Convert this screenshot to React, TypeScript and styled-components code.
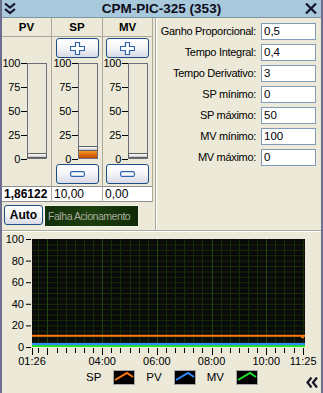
import React from 'react';
import styled, { createGlobalStyle } from 'styled-components';

const GlobalStyle = createGlobalStyle`
  html, body {
    margin: 0;
    padding: 0;
    background: #ece9d8;
  }
  body {
    font-family: "Liberation Sans", Arial, sans-serif;
    font-size: 11px;
    color: #000;
  }
  * { box-sizing: border-box; }
`;

interface Param {
  label: string;
  value: string;
}

interface Channel {
  name: string;
  value: string;
  fill: number;
  bold?: boolean;
  buttons?: boolean;
}

const params: Param[] = [
  { label: 'Ganho Proporcional:', value: '0,5' },
  { label: 'Tempo Integral:', value: '0,4' },
  { label: 'Tempo Derivativo:', value: '3' },
  { label: 'SP mínimo:', value: '0' },
  { label: 'SP máximo:', value: '50' },
  { label: 'MV mínimo:', value: '100' },
  { label: 'MV máximo:', value: '0' },
];

const channels: Channel[] = [
  { name: 'PV', value: '1,86122', fill: 0, bold: true },
  { name: 'SP', value: '10,00', fill: 7, buttons: true },
  { name: 'MV', value: '0,00', fill: 0, buttons: true },
];

const scale = ['100', '75', '50', '25', '0'];

// chart geometry (svg coords)
const PX = 30;
const PY = 7;
const PW = 273;
const PH = 108;
const START = 86; // 01:26 in minutes
const END = 685; // 11:25
const tx = (m: number) => PX + ((m - START) * PW) / (END - START);
const vy = (v: number) => PY + PH - (v * PH) / 100;

const Chart = () => {
  const ticks: number[] = [];
  for (let m = 100; m < END; m += 20) ticks.push(m);
  const hLines: number[] = [];
  for (let v = 5; v < 100; v += 5) hLines.push(v);
  const labels = [
    { t: START, s: '01:26' },
    { t: 240, s: '04:00' },
    { t: 360, s: '06:00' },
    { t: 480, s: '08:00' },
    { t: 600, s: '10:00' },
    { t: END - 4, s: '11:25' },
  ];
  return (
    <svg width={319} height={134} style={{ display: 'block' }}>
      <rect x={PX} y={PY} width={PW} height={PH} fill="#0a0a0a" />
      {hLines.map((v) => (
        <line key={v} x1={PX} x2={PX + PW} y1={vy(v) + 0.5} y2={vy(v) + 0.5} stroke="#142c09" />
      ))}
      {ticks.map((m) => (
        <line
          key={m}
          x1={Math.round(tx(m)) + 0.5}
          x2={Math.round(tx(m)) + 0.5}
          y1={PY}
          y2={PY + PH}
          stroke={m % 120 === 0 ? '#244410' : '#142c09'}
        />
      ))}
      <line x1={PX} x2={PX + PW} y1={vy(10) - 0.5} y2={vy(10) - 0.5} stroke="#ff7a10" strokeWidth={2} />
      <rect x={PX + PW - 4} y={vy(10) - 1} width={3} height={3} fill="#ff7a10" />
      <line x1={PX} x2={PX + PW} y1={PY + PH - 3} y2={PY + PH - 3} stroke="#2f8cff" strokeWidth={2} />
      <line x1={PX} x2={PX + PW} y1={PY + PH - 1} y2={PY + PH - 1} stroke="#22e02a" strokeWidth={2} />
      {[0, 20, 40, 60, 80, 100].map((v) => (
        <g key={v}>
          <line x1={PX - 6} x2={PX - 1} y1={vy(v) + 0.5} y2={vy(v) + 0.5} stroke="#000" />
          <text x={PX - 8} y={vy(v) + 4} textAnchor="end" fontSize={11} fontFamily="Liberation Sans, Arial, sans-serif">
            {v}
          </text>
        </g>
      ))}
      {[START, ...ticks, END - 4].map((m) => (
        <line
          key={'t' + m}
          x1={Math.round(tx(m)) + 0.5}
          x2={Math.round(tx(m)) + 0.5}
          y1={PY + PH + 1}
          y2={PY + PH + (m % 120 === 0 || m === START || m === END - 4 ? 8 : 6)}
          stroke="#000"
        />
      ))}
      {labels.map((l) => (
        <text
          key={l.s}
          x={tx(l.t)}
          y={133}
          textAnchor="middle"
          fontSize={11}
          fontFamily="Liberation Sans, Arial, sans-serif"
        >
          {l.s}
        </text>
      ))}
    </svg>
  );
};

const PlusIcon = () => (
  <svg width={15} height={13} viewBox="0 0 15 13">
    <path d="M5.5 0.5h4v4h5v4h-5v4h-4v-4h-5v-4h5z" fill="#fff" stroke="#2c63ab" strokeWidth={1.2} />
  </svg>
);

const MinusIcon = () => (
  <svg width={15} height={6} viewBox="0 0 15 6">
    <rect x={0.6} y={0.6} width={13.8} height={4.8} rx={1.5} fill="#fff" stroke="#2c63ab" strokeWidth={1.2} />
  </svg>
);

const LegendLine = ({ color }: { color: string }) => (
  <svg width={20} height={13} viewBox="0 0 20 13">
    <polyline points="1,9 13,2 19,6" fill="none" stroke={color} strokeWidth={2} />
  </svg>
);

const App = () => {
  return (
    <>
      <GlobalStyle />
      <Window>
        <TitleBar>
          <svg width={12} height={13} viewBox="0 0 12 13">
            <polyline points="1,1.5 6,5.5 11,1.5" fill="none" stroke="#15152a" strokeWidth={2.2} />
            <polyline points="1,7 6,11 11,7" fill="none" stroke="#15152a" strokeWidth={2.2} />
          </svg>
          <Title>CPM-PIC-325 (353)</Title>
          <svg width={12} height={11} viewBox="0 0 12 11">
            <path d="M1 0.5 L11 10.5 M11 0.5 L1 10.5" stroke="#15152a" strokeWidth={2.2} />
          </svg>
        </TitleBar>
        <TopPanel>
          <LeftPane>
            <Table>
              {channels.map((c) => (
                <Column key={c.name} $wide={c.name === 'SP'}>
                  <Header>{c.name}</Header>
                  <Controls>
                    <ButtonSlot>{c.buttons && <XpButton><PlusIcon /></XpButton>}</ButtonSlot>
                    <SliderRow>
                      <Scale>
                        {scale.map((s) => (
                          <ScaleLabel key={s}>
                            {s}
                            <Dash />
                          </ScaleLabel>
                        ))}
                      </Scale>
                      <Track>
                        <Thumb />
                        <Fill style={{ height: c.fill }} />
                      </Track>
                    </SliderRow>
                    <ButtonSlot>{c.buttons && <XpButton><MinusIcon /></XpButton>}</ButtonSlot>
                  </Controls>
                  <ValueCell $bold={c.bold}>{c.value}</ValueCell>
                </Column>
              ))}
            </Table>
            <AutoRow>
              <AutoButton>Auto</AutoButton>
              <FaultBox>Falha Acionamento</FaultBox>
            </AutoRow>
          </LeftPane>
          <RightPane>
            {params.map((p) => (
              <React.Fragment key={p.label}>
                <ParamLabel>{p.label}</ParamLabel>
                <ParamField>{p.value}</ParamField>
              </React.Fragment>
            ))}
          </RightPane>
        </TopPanel>
        <ChartPanel>
          <Chart />
          <LegendRow>
            <LegendText>SP</LegendText>
            <Swatch><LegendLine color="#ff7a10" /></Swatch>
            <LegendText>PV</LegendText>
            <Swatch><LegendLine color="#2f8cff" /></Swatch>
            <LegendText>MV</LegendText>
            <Swatch><LegendLine color="#22e02a" /></Swatch>
            <Collapse>
              <svg width={12} height={11} viewBox="0 0 12 11">
                <polyline points="5.5,0.5 1.5,5.5 5.5,10.5" fill="none" stroke="#15152a" strokeWidth={2.2} />
                <polyline points="11,0.5 7,5.5 11,10.5" fill="none" stroke="#15152a" strokeWidth={2.2} />
              </svg>
            </Collapse>
          </LegendRow>
        </ChartPanel>
      </Window>
    </>
  );
};

const Window = styled.div`
  width: 323px;
  height: 393px;
  display: flex;
  flex-direction: column;
  background: #ece9d8;
  border-left: 2px solid #6e6e8e;
  border-right: 2px solid #6e6e8e;
  overflow: hidden;
`;

const TitleBar = styled.div`
  height: 18px;
  flex: none;
  display: grid;
  grid-template-columns: 14px 1fr 14px;
  align-items: center;
  padding: 0 2px 0 2px;
  background: #a8c8dc;
  border-bottom: 1px solid #7f94a6;
`;

const Title = styled.div`
  text-align: center;
  font-weight: bold;
  font-size: 13.5px;
  line-height: 17px;
  color: #0c0c18;
`;

const TopPanel = styled.div`
  height: 213px;
  flex: none;
  display: flex;
  border-bottom: 1px solid #aca899;
`;

const LeftPane = styled.div`
  width: 153px;
  display: flex;
  flex-direction: column;
`;

const Table = styled.div`
  display: flex;
  width: 151px;
`;

const Column = styled.div<{ $wide?: boolean }>`
  width: ${(p) => (p.$wide ? 51 : 50)}px;
  display: flex;
  flex-direction: column;
  border-right: 1px solid #aca899;
`;

const Header = styled.div`
  height: 19px;
  border-bottom: 1px solid #aca899;
  text-align: center;
  font-weight: bold;
  font-size: 11.5px;
  line-height: 18px;
`;

const Controls = styled.div`
  height: 150px;
  padding: 1px 0 0;
  display: flex;
  flex-direction: column;
  gap: 5px;
  border-bottom: 1px solid #8f8f8f;
`;

const ButtonSlot = styled.div`
  height: 20px;
  display: flex;
  justify-content: center;
`;

const XpButton = styled.div`
  width: 43px;
  height: 20px;
  border: 1px solid #1c4f86;
  border-radius: 3px;
  background: linear-gradient(#ffffff 0%, #f6f6f9 45%, #d8dae6 100%);
  display: flex;
  align-items: center;
  justify-content: center;
`;

const SliderRow = styled.div`
  height: 96px;
  display: flex;
  justify-content: flex-end;
  padding-right: 4px;
`;

const Scale = styled.div`
  height: 108px;
  margin-top: -6px;
  display: flex;
  flex-direction: column;
  justify-content: space-between;
  align-items: flex-end;
`;

const ScaleLabel = styled.div`
  height: 12px;
  line-height: 12px;
  display: flex;
  align-items: center;
  gap: 1px;
  font-size: 11px;
  letter-spacing: -0.3px;
`;

const Dash = styled.span`
  width: 6px;
  height: 1px;
  background: #000;
`;

const Track = styled.div`
  width: 20px;
  height: 96px;
  border: 1px solid #6d6d80;
  background: #ece9d8;
  display: flex;
  flex-direction: column;
  justify-content: flex-end;
`;

const Thumb = styled.div`
  height: 5px;
  margin: 0 -1px;
  border: 1px solid #606060;
  border-radius: 1px;
  background: linear-gradient(#ffffff, #c8c8c8);
`;

const Fill = styled.div`
  background: linear-gradient(#f39a32 0%, #e06b08 50%, #b84c00 100%);
`;

const ValueCell = styled.div<{ $bold?: boolean }>`
  height: 15px;
  background: #fff;
  border-bottom: 1px solid #8f8f8f;
  padding-left: 2px;
  font-size: 12px;
  line-height: 14px;
  font-weight: ${(p) => (p.$bold ? 'bold' : 'normal')};
  white-space: nowrap;
`;

const AutoRow = styled.div`
  display: flex;
  align-items: flex-start;
  gap: 1px;
  padding: 3px 0 0 2px;
`;

const AutoButton = styled.div`
  width: 39px;
  height: 20px;
  border: 1px solid #1c4f86;
  border-radius: 3px;
  background: linear-gradient(#ffffff 0%, #f6f6f9 45%, #d8dae6 100%);
  font-weight: bold;
  font-size: 12px;
  line-height: 18px;
  text-align: center;
`;

const FaultBox = styled.div`
  width: 95px;
  height: 22px;
  border: 1px solid #f4f2e8;
  background: linear-gradient(90deg, #12300a 0%, #1d3f0e 50%, #0f2a07 100%);
  color: #a9ad9e;
  font-size: 10.5px;
  letter-spacing: -0.45px;
  line-height: 20px;
  padding-left: 3px;
  white-space: nowrap;
  overflow: hidden;
`;

const RightPane = styled.div`
  flex: 1;
  border-left: 1px solid #aca899;
  box-shadow: inset 1px 0 #fff;
  display: grid;
  grid-template-columns: 1fr 55px;
  grid-auto-rows: 17px;
  column-gap: 5px;
  row-gap: 4px;
  align-content: start;
  padding: 5px 5px 0 0;
`;

const ParamLabel = styled.div`
  text-align: right;
  line-height: 17px;
  white-space: nowrap;
  letter-spacing: -0.3px;
`;

const ParamField = styled.div`
  border: 1px solid #7f9db9;
  background: #fff;
  padding: 0 2px;
  line-height: 15px;
  font-size: 11.5px;
`;

const ChartPanel = styled.div`
  flex: 1;
  border-top: 1px solid #fff;
  display: flex;
  flex-direction: column;
`;

const LegendRow = styled.div`
  flex: 1;
  display: flex;
  align-items: flex-start;
  padding: 4px 3px 0 84px;
`;

const LegendText = styled.span`
  font-size: 11.5px;
  line-height: 15px;
  margin-right: 12px;
`;

const Swatch = styled.div`
  width: 22px;
  height: 15px;
  background: #000;
  border: 1px solid #a5a5a5;
  margin-right: 11px;
  display: flex;
`;

const Collapse = styled.div`
  margin-left: auto;
  margin-top: 7px;
  display: flex;
`;

export default App;
